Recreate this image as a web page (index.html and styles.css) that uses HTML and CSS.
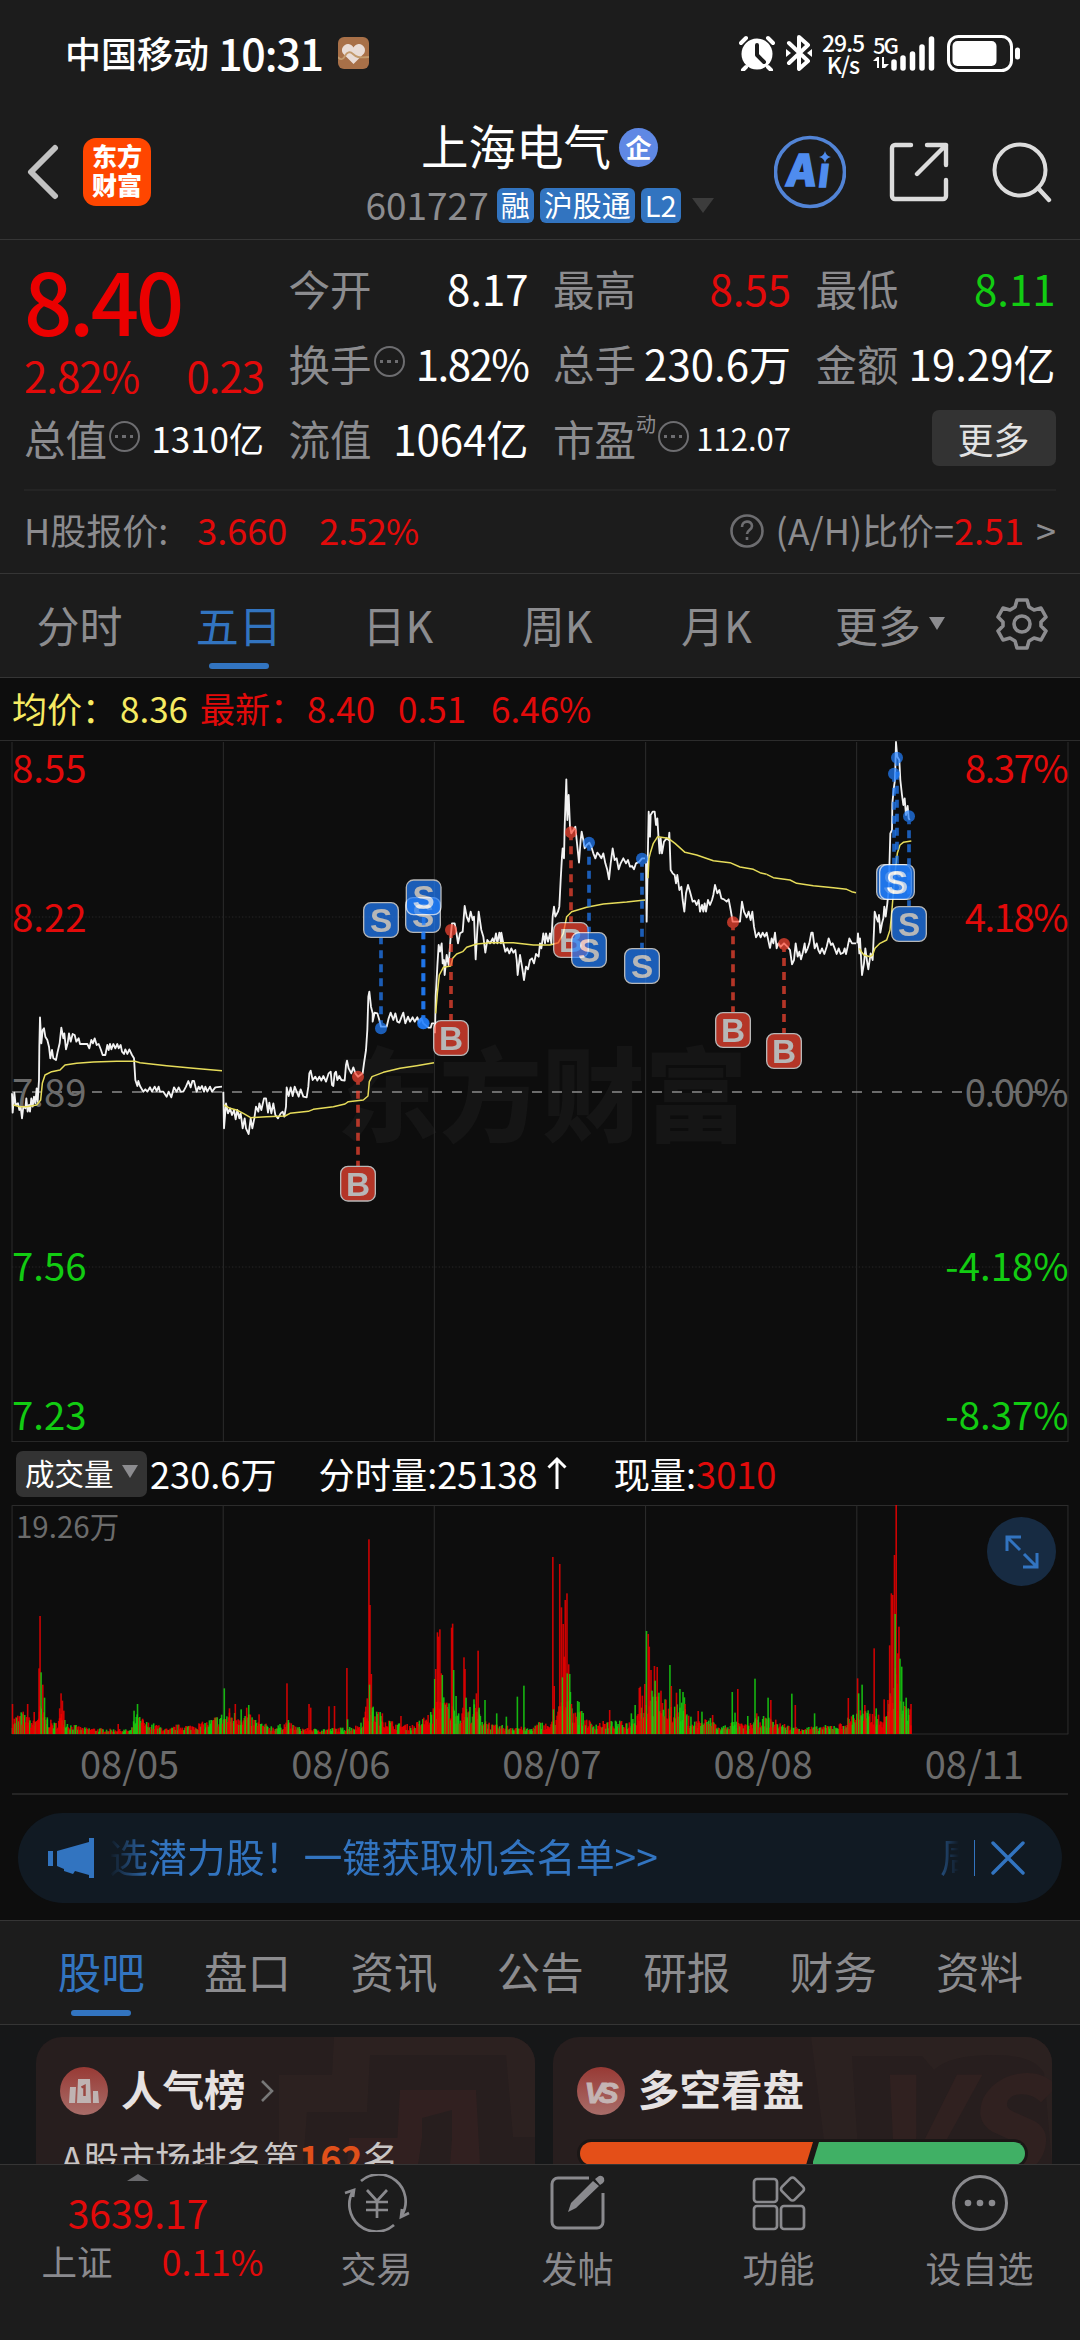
FILE: index.html
```html
<!DOCTYPE html>
<html lang="zh-CN">
<head>
    <meta charset="UTF-8">
    <meta name="viewport" content="width=device-width, initial-scale=1.0">
    <title>上海电气 601727</title>
    <link rel="stylesheet" href="styles.css">
</head>
<body>
    <div class="status-bar">
        <span class="carrier">中国移动</span>
        <span class="clock">10:31</span>
        <svg class="health" width="31" height="32" viewBox="0 0 31 32">
            <rect width="31" height="32" rx="6" fill="#a87048"/>
            <path d="M15.5 27 5 16.500C2 12 6 6.500 10.500 7c2.500.3 4 2 5 3.500 1-1.500 2.500-3.200 5-3.500 4.500-.5 8.500 5 5.500 9.500z" fill="#e9dcd6"/>
            <path d="M0 20c2 3 5 3 7-1s5-5 8-2 5 4 16 3" fill="none" stroke="#c39a6c" stroke-width="1.800"/>
        </svg>
        <div class="status-icons">
            <svg width="36" height="36" viewBox="0 0 36 36">
                <circle cx="18" cy="19" r="15.500" fill="#fff"/>
                <path d="M7 32l-3 3M29 32l3 3M2 8l5-5M34 8l-5-5" stroke="#fff" stroke-width="4" stroke-linecap="round"/>
                <path d="M18 10v10l7 7" fill="none" stroke="#1c1c1c" stroke-width="4" stroke-linecap="round" stroke-linejoin="round"/>
            </svg>
            <svg class="bluetooth" width="26" height="36" viewBox="0 0 26 36">
                <path d="M3 8l19 18-9 8V2l9 8L3 28" fill="none" stroke="#fff" stroke-width="4" stroke-linejoin="round" stroke-linecap="round"/>
                <path d="M0 14l5 4-5 4zM26 14l-5 4 5 4z" fill="#fff"/>
            </svg>
            <div class="speed">29.5<br>K/s</div>
            <div class="network">
                <span>5G</span>
                <svg width="16" height="11" viewBox="0 0 16 11">
                    <path d="M0 4l4-4h2v11H4V4zM9 0h2v7h5l-4 4H9z" fill="#fff"/>
                </svg>
            </div>
            <svg class="signal" width="44" height="36" viewBox="0 0 44 36">
                <path d="M3 27v6M12 23v10M21.500 19v14M31 12v21M40.500 4v29" stroke="#fff" stroke-width="5.500" stroke-linecap="round"/>
            </svg>
            <svg class="battery" width="74" height="37" viewBox="0 0 74 37">
                <rect x="1.500" y="1.500" width="63" height="34" rx="10" fill="none" stroke="#fff" stroke-width="3"/>
                <rect x="5.500" y="6" width="44" height="25" rx="5" fill="#fff"/>
                <rect x="68" y="12.500" width="5" height="12" rx="2.500" fill="#fff"/>
            </svg>
        </div>
    </div>

    <header class="header">
        <div class="header-left">
            <svg width="32" height="56" viewBox="0 0 32 56">
                <path d="M28 4L4 28l24 24" fill="none" stroke="#c2c2c2" stroke-width="6" stroke-linecap="round" stroke-linejoin="round"/>
            </svg>
            <div class="logo">东方<br>财富</div>
        </div>
        <div class="header-title">
            <div class="stock-name">上海电气<span class="ent-badge">企</span></div>
            <div class="stock-code">
                <span class="code">601727</span>
                <span class="tag">融</span>
                <span class="tag">沪股通</span>
                <span class="tag">L2</span>
                <span class="caret"></span>
            </div>
        </div>
        <div class="header-right">
            <svg width="72" height="74" viewBox="0 0 72 74">
                <circle cx="36" cy="37" r="34.500" fill="none" stroke="#5284d6" stroke-width="3.600"/>
                <g transform="translate(6 0) skewX(-7)">
                    <text class="ai-text" x="12" y="51">A</text>
                    <text class="ai-text" x="43" y="52">ı</text>
                </g>
                <path d="M51 16q1 5 6 6-5 1-6 6-1-5-6-6 5-1 6-6z" fill="#4f8cee"/>
            </svg>
            <svg width="60" height="60" viewBox="0 0 60 60">
                <path d="M22 3H6a3 3 0 0 0-3 3v48a3 3 0 0 0 3 3h48a3 3 0 0 0 3-3V38M38 3h19v20M57 3L28 32" fill="none" stroke="#dcdcdc" stroke-width="4.400" stroke-linecap="round" stroke-linejoin="round"/>
            </svg>
            <svg width="60" height="62" viewBox="0 0 60 62">
                <circle cx="28" cy="29" r="25.500" fill="none" stroke="#dcdcdc" stroke-width="4"/>
                <path d="M46 47l11 12" stroke="#dcdcdc" stroke-width="4.400" stroke-linecap="round"/>
            </svg>
        </div>
    </header>

    <section class="quote">
        <div class="quote-grid">
            <div class="price-box">
                <div class="price">8.40</div>
                <div class="change"><span>2.82%</span><span>0.23</span></div>
            </div>
            <div class="cell"><label>今开</label><b>8.17</b></div>
            <div class="cell"><label>最高</label><b class="red">8.55</b></div>
            <div class="cell"><label>最低</label><b class="green">8.11</b></div>
            <div class="cell"><label>换手</label><i class="more-dot"></i><b class="percent">1.82%</b></div>
            <div class="cell"><label>总手</label><b>230.6万</b></div>
            <div class="cell"><label>金额</label><b>19.29亿</b></div>
            <div class="cell"><label>总值</label><i class="more-dot"></i><b class="mid">1310亿</b></div>
            <div class="cell"><label>流值</label><b>1064亿</b></div>
            <div class="cell"><label>市盈<sup>动</sup></label><i class="more-dot"></i><b class="small">112.07</b></div>
            <div class="cell"><button class="more-btn">更多</button></div>
        </div>
        <div class="h-share">
            <span>H股报价:</span>
            <span class="red h-price">3.660</span>
            <span class="red h-pct">2.52%</span>
            <div class="ratio">
                <svg width="34" height="36" viewBox="0 0 34 36">
                    <circle cx="17" cy="18" r="15.500" fill="none" stroke="#6d6d70" stroke-width="2.600"/>
                    <path d="M12 14c0-7 10-7 10-1 0 4-5 4-5 8M17 24v3" fill="none" stroke="#6d6d70" stroke-width="2.600"/>
                </svg>
                <span>(A/H)比价=<span class="red">2.51</span></span>
                <span class="gt">&gt;</span>
            </div>
        </div>
    </section>

    <nav class="period-tabs">
        <a>分时</a>
        <a class="active">五日</a>
        <a>日K</a>
        <a>周K</a>
        <a>月K</a>
        <a>更多<i class="tri"></i></a>
        <a>
            <svg width="52" height="52" viewBox="0 0 52 52" fill="none" stroke="#8c8c8f" stroke-width="3.600" stroke-linejoin="round">
                <path d="M21 2h10l2 7 5 3 7-2 5 9-5 5v4l5 5-5 9-7-2-5 3-2 7H21l-2-7-5-3-7 2-5-9 5-5v-4l-5-5 5-9 7 2 5-3z"/>
                <circle cx="26" cy="26" r="8"/>
            </svg>
        </a>
    </nav>

    <div class="avg-row">
        <span class="yellow">均价：</span><span class="yellow v1">8.36</span>
        <span class="red">最新：</span><span class="red v2">8.40</span>
        <span class="red v3">0.51</span><span class="red v4">6.46%</span>
    </div>

    <div class="chart">
        <!-- three chart units per pixel -->
        <svg width="1080" height="702" viewBox="0 30 3240 2106">
            <text class="watermark" x="1010" y="1212">东方财富</text>
            <g class="grid-lines">
                <path d="M0 31.500H3240M36 2135H3204"/>
                <path d="M36 36V2136M670 36V2136M1303 36V2136M1937 36V2136M2570 36V2136M3204 36V2136"/>
                <path class="dotted" d="M36 561H3204M36 1611H3204"/>
                <path class="zero" d="M36 1086H3190"/>
            </g>
            <g class="axis">
                <text class="up" x="36" y="158">8.55</text>
                <text class="up" x="36" y="605">8.22</text>
                <text class="flat" x="36" y="1130">7.89</text>
                <text class="down" x="36" y="1652">7.56</text>
                <text class="down" x="36" y="2099">7.23</text>
                <text class="up end" x="3206" y="158" textLength="312">8.37%</text>
                <text class="up end" x="3206" y="605" textLength="312">4.18%</text>
                <text class="flat end" x="3206" y="1130" textLength="312">0.00%</text>
                <text class="down end" x="3206" y="1652" textLength="370">-4.18%</text>
                <text class="down end" x="3206" y="2099" textLength="370">-8.37%</text>
            </g>
            <!-- 08/05 and 08/06 -->
            <g>
                <polyline class="price-line" points="36,1090 38,1148 43,1088 47,1125 54,1120 58,1140 62,1130 66,1165 70,1130 76,1135 79,1105 83,1145 87,1125 90,1145 94,1105 98,1130 102,1100 106,1120 110,1075 113,1115 117,1050 118,950 120,862 124,940 128,900 132,895 136,920 142,930 147,950 151,985 156,960 160,985 168,990 173,965 179,940 184,893 190,925 193,910 198,958 203,940 207,910 212,935 218,912 224,915 229,935 236,925 240,942 262,942 268,955 274,930 279,940 284,925 290,945 296,942 303,960 308,975 316,975 322,945 326,960 330,942 334,958 340,942 346,955 352,942 356,955 362,945 366,965 372,972 376,958 382,972 388,958 396,975 402,985 406,1050 412,1068 415,1053 420,1068 430,1085 436,1078 442,1085 450,1072 456,1085 464,1070 470,1083 476,1070 480,1085 490,1085 500,1100 506,1085 514,1102 522,1072 530,1085 536,1072 542,1085 550,1085 558,1070 565,1053 572,1072 577,1053 582,1053 590,1085 596,1070 600,1078 606,1068 612,1085 616,1070 622,1085 630,1070 636,1085 646,1072 666,1070"/>
                <polyline class="avg-line" points="40,1125 60,1130 80,1130 110,1125 122,1110 127,1060 135,1035 155,1025 180,1020 195,1005 230,1000 280,996 350,994 405,994 420,998 500,1007 580,1015 666,1022"/>
                <polyline class="price-line" points="670,1085 672,1195 678,1120 684,1150 690,1135 696,1155 702,1140 707,1168 712,1140 718,1165 722,1150 728,1195 734,1165 738,1195 746,1212 752,1165 757,1195 763,1165 768,1130 775,1145 778,1120 784,1140 792,1105 798,1105 804,1148 808,1118 814,1150 820,1120 826,1155 834,1165 842,1150 848,1145 853,1160 858,1130 860,1072 866,1098 872,1072 878,1098 884,1070 890,1085 896,1100 902,1078 910,1100 920,1102 925,1070 928,1030 932,1022 938,1050 946,1040 952,1052 958,1040 964,1052 970,1038 978,1055 986,1030 992,1025 996,1065 1000,1068 1004,1030 1008,1025 1012,1050 1018,1038 1024,1050 1034,1052 1038,1005 1041,992 1046,1015 1054,1030 1060,1012 1066,1030 1074,1040 1088,1030 1092,1000 1098,960 1102,900 1105,800 1108,785 1113,830 1118,850 1118,875 1124,848 1132,850 1138,870 1143,890 1160,890 1166,865 1172,848 1180,870 1186,850 1192,875 1198,878 1205,860 1210,848 1216,880 1224,860 1230,875 1238,862 1244,875 1252,862 1258,878 1264,865 1270,880 1285,893 1292,893 1296,880 1303,880"/>
                <polyline class="avg-line" points="672,1125 690,1135 710,1140 730,1150 752,1163 800,1160 855,1158 870,1150 925,1144 940,1138 1000,1130 1035,1122 1045,1115 1090,1110 1104,1098 1108,1055 1116,1040 1150,1027 1200,1015 1250,1007 1302,998"/>
            </g>
            <!-- 08/07 and the morning of 08/08 -->
            <g transform="translate(1290 0)">
                <polyline class="price-line" points="15,910 17,800 22,710 26,645 30,665 35,640 38,700 42,690 44,735 50,675 56,705 62,620 66,580 74,580 78,600 84,640 90,610 98,605 104,528 110,560 116,575 122,545 128,570 132,560 137,688 142,600 146,545 154,600 160,620 166,668 172,630 180,640 188,625 192,640 198,610 202,640 208,608 213,640 214,608 220,640 226,665 232,655 238,670 244,655 250,668 256,660 260,690 263,735 270,675 276,710 282,750 288,710 294,718 300,690 306,685 312,700 318,672 326,680 330,640 334,655 340,610 345,640 348,610 354,635 360,610 364,640 368,560 372,530 376,560 384,545 388,530 392,450 396,380 398,355 402,385 404,290 409,148 412,270 416,195 420,290 424,310 430,300 436,290 440,330 447,398 452,330 455,305 460,330 464,355 470,345 478,338 484,350 490,370 496,385 502,368 508,375 514,385 520,370 526,400 532,420 537,448 542,400 548,355 554,390 560,385 566,418 572,400 580,385 588,400 594,390 600,410 606,408 612,418 618,400 628,395 636,385 645,385"/>
                <polyline class="avg-line" points="17,850 22,790 28,735 40,712 62,708 68,685 80,672 98,665 110,652 140,642 180,638 250,638 310,645 360,645 385,638 400,610 410,560 425,545 470,532 520,522 590,516 645,510"/>
                <polyline class="price-line" points="648,400 650,575 653,400 656,245 660,320 662,255 668,245 674,245 678,285 682,265 686,330 689,370 692,325 696,370 702,335 710,325 716,330 718,308 722,420 728,430 734,435 738,460 742,435 748,480 754,470 758,510 763,545 768,490 774,465 780,485 788,515 794,512 800,525 806,510 810,545 816,525 820,545 824,520 828,545 834,510 840,525 846,510 850,495 855,465 862,490 868,480 874,505 882,508 890,515 896,508 902,540 908,575 930,575 936,515 942,545 950,562 956,545 962,570 967,545 972,590 978,622 986,608 992,622 998,608 1004,620 1010,608 1020,655"/>
                <polyline class="avg-line" points="654,445 657,385 662,365 670,340 683,320 715,325 735,340 765,367 800,375 850,392 900,398 930,411 970,418 990,428 1010,433"/>
            </g>
            <!-- the rest of 08/08 and 08/11 -->
            <g transform="translate(2280 0)">
                <polyline class="price-line" points="30,655 35,625 40,640 45,608 50,655 55,640 62,650 72,640 82,650 90,660 96,703 102,690 107,640 113,680 118,665 123,688 128,670 134,640 137,668 143,655 148,640 154,608 158,608 164,655 170,640 175,660 180,670 186,655 193,672 200,650 206,625 213,645 218,640 224,655 230,672 236,655 242,672 250,668 254,655 258,672 263,650 268,625 276,640 288,640"/>
                <polyline class="avg-line" points="20,433 40,443 90,450 110,460 160,467 220,473 260,478 275,485 288,488"/>
                <polyline class="price-line" points="292,640 294,610 298,670 300,625 306,735 312,700 316,655 322,700 325,718 332,670 338,690 342,600 344,545 350,565 354,575 357,555 361,608 366,580 370,565 373,530 377,560 382,520 386,480 389,380 391,310 396,300 397,220 402,170 405,150 408,36 410,60 412,80 418,90 421,150 426,195 430,225 434,205 438,255 443,228 446,265 449,270"/>
                <polyline class="avg-line" points="298,655 304,665 312,675 330,680 338,675 345,655 360,640 380,630 390,600 394,560 400,490 406,420 412,370 420,345 430,337 454,333"/>
            </g>
            <g id="markers"></g>
        </svg>
    </div>

    <div class="volume-row">
        <button class="vol-btn">成交量<i class="tri"></i></button>
        <span>230.6万</span>
        <span class="minute-vol">分时量:25138</span>
        <svg class="arrow-up" width="20" height="34" viewBox="0 0 20 34">
            <path d="M10 33V3M1.500 11.500L10 3l8.500 8.500" fill="none" stroke="#fff" stroke-width="3"/>
        </svg>
        <span>现量:<span class="red">3010</span></span>
    </div>

    <div class="volume-chart">
        <svg width="1080" height="230" viewBox="0 225 3136 690" preserveAspectRatio="none">
            <g class="grid-lines">
                <path d="M35 226.500H3102M35 912H3102"/>
                <path d="M35 226V912M648 226V912M1261 226V912M1874.500 226V912M2488 226V912M3101 226V912"/>
            </g>
            <g id="volume"></g>
        </svg>
        <span class="vol-max">19.26万</span>
        <div class="expand">
            <svg width="34" height="34" viewBox="0 0 34 34" fill="none" stroke="#3274c0" stroke-width="3">
                <path d="M2 16V2h14M2 2l13 13M32 18v14H18M32 32L19 19"/>
            </svg>
        </div>
    </div>

    <div class="dates">
        <span>08/05</span><span>08/06</span><span>08/07</span><span>08/08</span><span>08/11</span>
    </div>

    <div class="notice-wrap">
        <div class="notice">
            <svg width="46" height="40" viewBox="0 0 46 40" fill="#3274c0">
                <path d="M0 13h5v15H0zM9 13l32-9V0h5v40h-5v-3l-14-4-2 3-9-3 0-2-7-3z"/>
            </svg>
            <div class="notice-text">选潜力股！一键获取机会名单&gt;&gt;</div>
            <div class="notice-next">周</div>
            <div class="notice-line"></div>
            <svg width="34" height="34" viewBox="0 0 34 34">
                <path d="M2 2l30 30M32 2L2 32" stroke="#3274c0" stroke-width="3.400" stroke-linecap="round"/>
            </svg>
        </div>
    </div>

    <nav class="info-tabs">
        <a class="active">股吧</a><a>盘口</a><a>资讯</a><a>公告</a><a>研报</a><a>财务</a><a>资料</a>
    </nav>

    <div class="cards">
        <div class="card">
            <svg class="card-bg" width="499" height="128" viewBox="0 0 499 128">
                <path d="M298 0h201v100h-22L470 18H334l-3 57h-60l-4 53h-24V38h53z" fill="#2c2120"/>
                <path d="M364 53h76l4 75h-30l2-27v-28l-30 8v20l-4 27h-22zM313 101h50v27h-52z" fill="#312020"/>
            </svg>
            <div class="card-head">
                <svg width="48" height="48" viewBox="0 0 48 48">
                    <defs>
                        <linearGradient id="badge" x2="0" y2="1">
                            <stop stop-color="#983a35"/>
                            <stop offset="1" stop-color="#a86d69"/>
                        </linearGradient>
                    </defs>
                    <circle cx="24" cy="24" r="24" fill="url(#badge)"/>
                    <path d="M10 20h6l-1 16H9zM18 12h12l1 24H17zM33 24h5l1 12h-6z" fill="#bfb3b2"/>
                    <path d="M21.500 20.500l3-1.500v10" fill="none" stroke="#9a4741" stroke-width="2.500"/>
                </svg>
                <h3>人气榜</h3>
                <svg class="chev" width="14" height="24" viewBox="0 0 14 24">
                    <path d="M2 2l10 10L2 22" fill="none" stroke="#777" stroke-width="2.600"/>
                </svg>
            </div>
            <div class="rank">A股市场排名第<b>162</b>名</div>
        </div>
        <div class="card">
            <svg class="card-bg" width="499" height="128" viewBox="0 0 499 128">
                <path d="M258 0h241v128h-15l-12-20-190 20h-8z" fill="#2b2120"/>
                <path d="M299 19h70l12 14q15-15 60-15 40 0 50 18l8 92H306z" fill="#271e1e"/>
                <text class="bg-vs" x="312" y="142">VS</text>
            </svg>
            <div class="card-head">
                <svg width="48" height="48" viewBox="0 0 48 48">
                    <circle cx="24" cy="24" r="24" fill="url(#badge)"/>
                    <text class="vs" x="7.500" y="36">VS</text>
                </svg>
                <h3>多空看盘</h3>
            </div>
            <div class="bar"><i class="bull"></i><i class="bear"></i></div>
        </div>
    </div>

    <footer class="bottom-bar">
        <div class="index">
            <i class="up-tri"></i>
            <div class="index-value">3639.17</div>
            <div class="index-row"><span>上证</span><span class="red">0.11%</span></div>
        </div>
        <div class="item">
            <svg width="66" height="58" viewBox="0 0 66 58" fill="none" stroke="#8a8a8e" stroke-width="2.700">
                <path d="M17 7a27 27 0 0 1 41 34M50 51A27 27 0 0 1 9 17M1 19l9-3-1 7M65 39l-8 4 1-8"/>
                <path d="M23 16l10 11 10-11M33 27v17M22 28h22M22 36h22"/>
            </svg>
            <span>交易</span>
        </div>
        <div class="item">
            <svg width="56" height="56" viewBox="0 0 56 56">
                <path d="M39 3H8a6 6 0 0 0-6 6v38a6 6 0 0 0 6 6h39a6 6 0 0 0 6-6V18" fill="none" stroke="#8a8a8e" stroke-width="3"/>
                <path d="M18 37l3-9 22-22 6 5-23 22zM45 4l4-3q3-1 5 2 1 3-1 5l-3 2z" fill="#8a8a8e"/>
            </svg>
            <span>发帖</span>
        </div>
        <div class="item">
            <svg width="54" height="54" viewBox="0 0 54 54" fill="none" stroke="#8a8a8e" stroke-width="2.700">
                <rect x="2" y="3" width="23" height="23" rx="3"/>
                <rect x="2" y="30" width="23" height="23" rx="3"/>
                <rect x="29" y="30" width="23" height="23" rx="3"/>
                <rect x="31.500" y="4" width="18" height="18" rx="3" transform="rotate(45 40.500 13)"/>
            </svg>
            <span>功能</span>
        </div>
        <div class="item">
            <svg width="58" height="58" viewBox="0 0 58 58">
                <circle cx="29" cy="29" r="26.500" fill="none" stroke="#8a8a8e" stroke-width="3"/>
                <g fill="#8a8a8e"><circle cx="17" cy="29" r="3.300"/><circle cx="29" cy="29" r="3.300"/><circle cx="41" cy="29" r="3.300"/></g>
            </svg>
            <span>设自选</span>
        </div>
    </footer>

    <script src="script.js"></script>
</body>
</html>
```

FILE: styles.css
```css
* {
    box-sizing: border-box;
}
body {
    margin: 0;
    width: 1080px;
    height: 2340px;
    overflow: hidden;
    display: flex;
    flex-direction: column;
    background: #0d0d0d;
    color: #fff;
    font-family: "Noto Sans CJK SC", sans-serif;
    white-space: nowrap;
}
svg {
    display: block;
    flex: none;
}
button {
    font-family: inherit;
    border: none;
    padding: 0;
    color: inherit;
}
.red { color: #e20a0a; }
.green { color: #12cc12; }
.yellow { color: #f6ea62; }

/* status bar */
.status-bar {
    height: 108px;
    flex: none;
    display: flex;
    align-items: center;
    padding: 0 59px 2px 65px;
    background: #1c1c1c;
}
.carrier {
    font-size: 36px;
    font-weight: 500;
    line-height: 50px;
    margin-top: -2px;
}
.clock {
    font-size: 43px;
    font-weight: 500;
    line-height: 50px;
    letter-spacing: -1.200px;
    margin: -3px 0 0 9px;
}
.health {
    margin-left: 15px;
}
.status-icons {
    display: flex;
    align-items: center;
    margin-left: auto;
}
.bluetooth { margin-left: 11px; }
.speed {
    width: 44px;
    margin-left: 9px;
    font-size: 23px;
    font-weight: 500;
    line-height: 22px;
    letter-spacing: -1px;
    text-align: center;
}
.network {
    margin: -5px 0 0 8px;
    width: 24px;
    font-size: 22px;
    font-weight: 500;
    line-height: 20px;
    letter-spacing: -2px;
}
.network svg { margin-top: 3px; }
.signal { margin-left: -6px; }
.battery { margin-left: 12px; }

/* header */
.header {
    height: 132px;
    flex: none;
    display: grid;
    grid-template-columns: 1fr auto 1fr;
    padding: 0 28px 0 27px;
    background: #1c1c1c;
    border-bottom: 1px solid #353535;
}
.header-left {
    display: flex;
    align-items: center;
    gap: 24px;
    height: 128px;
}
.logo {
    width: 68px;
    height: 68px;
    border-radius: 13px;
    background: #ff4600;
    font-size: 25px;
    font-weight: 900;
    line-height: 29px;
    padding-top: 3px;
    text-align: center;
}
.header-title {
    display: flex;
    flex-direction: column;
    align-items: center;
    padding-top: 7px;
}
.stock-name {
    display: flex;
    align-items: center;
    height: 60px;
    font-size: 47.500px;
    line-height: 60px;
}
.ent-badge {
    width: 39px;
    height: 39px;
    margin: 4px 0 0 8px;
    border-radius: 50%;
    background: #5f88e4;
    font-size: 26px;
    font-weight: 700;
    line-height: 37px;
    text-align: center;
}
.stock-code {
    display: flex;
    align-items: center;
    gap: 6px;
    height: 60px;
}
.code {
    font-size: 37px;
    line-height: 54px;
    margin: -3px 2px 0 0;
    color: #8c8c8f;
}
.tag {
    height: 35px;
    padding: 0 4px;
    border-radius: 6px;
    background: #3274c0;
    font-size: 29px;
    line-height: 33px;
}
.caret {
    margin-left: 5px;
    border: 11px solid transparent;
    border-top: 15px solid #3c3c3c;
    border-bottom: 0;
}
.header-right {
    display: flex;
    align-items: center;
    justify-content: flex-end;
    gap: 43px;
    height: 128px;
}
.ai-text {
    font: 900 43px "Noto Sans CJK SC", sans-serif;
    fill: #4f8cee;
    stroke: #4f8cee;
    stroke-width: 1.5px;
}

/* quote */
.quote {
    height: 334px;
    flex: none;
    padding: 10px 24px 0;
    background: #1c1c1c;
    border-bottom: 1px solid #353535;
}
.quote-grid {
    display: grid;
    grid-template-columns: 240px 240px 238px 240px;
    grid-template-rows: repeat(3, 75px);
    column-gap: 24.500px;
}
.price-box {
    grid-row: span 2;
    color: #eb0000;
}
.price {
    height: 100px;
    font-size: 85px;
    font-weight: 500;
    line-height: 98px;
    letter-spacing: -3.500px;
}
.change {
    display: flex;
    justify-content: space-between;
    font-size: 42px;
    line-height: 50px;
    letter-spacing: -1px;
    color: #e20a0a;
}
.cell {
    display: flex;
    align-items: center;
    height: 75px;
    line-height: 60px;
}
.cell label {
    font-size: 41.500px;
    color: #8c8c8f;
}
.cell b {
    margin-left: auto;
    font-size: 42px;
    font-weight: 400;
}
.cell .percent { letter-spacing: -1.5px; }
.cell .mid { font-size: 35px; }
.cell .small { font-size: 31px; }
.cell sup {
    display: inline-block;
    font-size: 20px;
    line-height: 20px;
    vertical-align: 24px;
}
.more-dot {
    width: 31px;
    height: 31px;
    flex: none;
    margin: -3px 0 0 2px;
    border: 2.500px solid #6d6d70;
    border-radius: 50%;
    background:
        radial-gradient(circle 2px at 5.500px 50%, #6d6d70 90%, transparent),
        radial-gradient(circle 2px at 13px 50%, #6d6d70 90%, transparent),
        radial-gradient(circle 2px at 20.500px 50%, #6d6d70 90%, transparent);
}
.more-btn {
    width: 124px;
    height: 56px;
    margin-left: auto;
    border-radius: 7px;
    background: #333;
    color: #e2e2e2;
    font-size: 36px;
    line-height: 50px;
}
.h-share {
    display: flex;
    align-items: center;
    height: 84px;
    margin-top: 14px;
    padding-bottom: 7px;
    border-top: 2px solid #242424;
    font-size: 36px;
    line-height: 60px;
    color: #8c8c8f;
}
.h-price { margin-left: 29px; }
.h-pct { margin-left: 32px; letter-spacing: -0.8px; }
.ratio {
    display: flex;
    align-items: center;
    margin-left: auto;
}
.ratio svg { margin: 4px 12px 0 0; }
.gt { margin-left: 12px; }

/* period tabs */
.period-tabs {
    height: 104px;
    flex: none;
    display: grid;
    grid-template-columns: repeat(5, 159.200px) 188px 76px;
    background: #1c1c1c;
    border-bottom: 1px solid #353535;
    font-size: 43px;
    color: #8c8c8f;
}
.period-tabs a,
.info-tabs a {
    position: relative;
    display: flex;
    align-items: center;
    justify-content: center;
    padding-bottom: 4px;
}
.period-tabs .active,
.info-tabs .active {
    color: #3274c0;
}
.period-tabs .active::after,
.info-tabs .active::after {
    content: "";
    position: absolute;
    bottom: 8px;
    width: 60px;
    height: 6px;
    border-radius: 3px;
    background: #3274c0;
}
.tri {
    margin-left: 8px;
    border: 8px solid transparent;
    border-top: 13px solid #8c8c8f;
    border-bottom: 0;
}

.avg-row {
    height: 62px;
    flex: none;
    display: flex;
    align-items: center;
    padding: 0 0 3px 12px;
    font-size: 35px;
    line-height: 59px;
}
.v1 { margin: 0 12px 0 3px; }
.v2 { margin-left: 2px; }
.v3 { margin-left: 23px; }
.v4 { margin-left: 25px; }

/* price chart */
.chart {
    height: 702px;
    flex: none;
}
.grid-lines path {
    fill: none;
    stroke: #2c2c2c;
    stroke-width: 3;
}
.grid-lines .dotted {
    stroke: #262626;
    stroke-dasharray: 4 6;
}
.grid-lines .zero {
    stroke: #8a8a8a;
    stroke-width: 5;
    stroke-dasharray: 30;
}
.watermark {
    font-size: 308px;
    font-weight: 900;
    fill: #151515;
}
.axis text { font-size: 115px; }
.axis .end { text-anchor: end; }
.axis .up { fill: #e20a0a; }
.axis .down { fill: #12cc12; }
.axis .flat { fill: #6b6b6b; }
.price-line,
.avg-line {
    fill: none;
    stroke: #f2f2f2;
    stroke-width: 5.500;
    stroke-linejoin: round;
}
.avg-line {
    stroke: #e6dc5a;
    stroke-width: 4.500;
}
.marker { opacity: 0.7; }
.marker line {
    stroke-width: 11;
    stroke-dasharray: 24 18;
}
.marker rect {
    stroke: #fff;
    stroke-width: 4;
}
.marker text {
    font: 700 100px "Liberation Sans", sans-serif;
    text-anchor: middle;
    fill: #fff;
}
.marker.sell rect, .marker.sell circle { fill: #2280ff; }
.marker.sell line { stroke: #2280ff; }
.marker.buy rect, .marker.buy circle { fill: #fb4733; }
.marker.buy line { stroke: #fb4733; }

/* volume */
.volume-row {
    height: 63px;
    flex: none;
    display: flex;
    align-items: center;
    padding: 0 0 2px 16px;
    font-size: 36.200px;
    line-height: 60px;
}
.vol-btn {
    display: flex;
    align-items: center;
    width: 131px;
    height: 46px;
    margin: 2px 3px 0 0;
    padding: 0 0 4px 9px;
    border-radius: 7px;
    background: #333;
    font-size: 29.500px;
    line-height: 40px;
}
.minute-vol { margin-left: 42px; }
.arrow-up { margin: 0 47px 0 9px; }
.volume-chart {
    position: relative;
    height: 230px;
    flex: none;
}
.volume-chart .r { fill: #f00000; }
.volume-chart .g { fill: #17d412; }
#volume rect { opacity: 0.85; }
.vol-max {
    position: absolute;
    left: 16px;
    top: 0;
    font-size: 29.500px;
    line-height: 40px;
    color: #6b6b6b;
}
.expand {
    position: absolute;
    right: 24px;
    top: 12px;
    width: 69px;
    height: 69px;
    border-radius: 50%;
    background: #172b42;
    display: flex;
    align-items: center;
    justify-content: center;
}
.dates {
    display: grid;
    grid-template-columns: repeat(5, 211.200px);
    flex: none;
    height: 60px;
    margin: 0 12px;
    padding-left: 12px;
    overflow: hidden;
    border-bottom: 2px solid #242424;
    font-size: 38px;
    line-height: 56px;
    text-align: center;
    color: #6b6b6b;
}

/* notice */
.notice-wrap {
    height: 125px;
    flex: none;
    padding: 18px 18px 0;
}
.notice {
    display: flex;
    align-items: center;
    height: 90px;
    padding: 0 37px 0 30px;
    border-radius: 45px;
    background: #111a23;
    color: #3274c0;
    font-size: 38.900px;
    line-height: 60px;
}
.notice-text {
    margin: -7px 0 0 15px;
    -webkit-mask-image: linear-gradient(90deg, transparent, #000 44px);
    mask-image: linear-gradient(90deg, transparent, #000 44px);
}
.notice-next {
    width: 19px;
    margin: -7px 15px 0 auto;
    overflow: hidden;
    opacity: 0.6;
    -webkit-mask-image: linear-gradient(90deg, #000, transparent);
    mask-image: linear-gradient(90deg, #000, transparent);
}
.notice-line {
    width: 1px;
    height: 36px;
    margin-right: 16px;
    background: #3274c0;
}

.info-tabs {
    height: 105px;
    flex: none;
    display: grid;
    grid-template-columns: repeat(7, 146.400px);
    padding-left: 28px;
    background: #1c1c1c;
    border-top: 1px solid #353535;
    border-bottom: 1px solid #353535;
    font-size: 43.500px;
    color: #8c8c8f;
}

/* cards */
.cards {
    height: 139px;
    flex: none;
    display: flex;
    gap: 18px;
    padding: 12px 28px 0 36px;
    overflow: hidden;
    background: #161718;
}
.card {
    position: relative;
    width: 499px;
    height: 200px;
    padding: 30px 24px 0;
    border-radius: 26px;
    overflow: hidden;
    background: #271e1e;
}
.card-bg {
    position: absolute;
    left: 0;
    top: 0;
}
.card-head {
    position: relative;
    display: flex;
    align-items: center;
    height: 48px;
}
.card-head h3 {
    margin: -6px 0 0 13px;
    font-size: 41.500px;
    font-weight: 700;
    line-height: 48px;
    color: #e6e2e2;
}
.chev { margin-left: 14px; }
.rank {
    position: relative;
    margin: 22px 0 0 1px;
    font-size: 36px;
    line-height: 40px;
    color: #c9c5c4;
}
.rank b { color: #e0501a; }
.bg-vs {
    font: italic 900 140px "Noto Sans CJK SC", sans-serif;
    fill: #302120;
}
.vs {
    font: italic 700 30px "Liberation Sans", sans-serif;
    letter-spacing: -6px;
    fill: #c4b4b3;
    stroke: #c4b4b3;
}
.bar {
    position: relative;
    display: flex;
    width: 451px;
    height: 29px;
    margin-top: 24px;
    border: 3px solid #1b1716;
    border-radius: 15px;
    overflow: hidden;
    background: #1b1716;
}
.bull {
    width: 233px;
    background: #e44f18;
    clip-path: polygon(0 0, 100% 0, 226px 100%, 0 100%);
}
.bear {
    flex: 1;
    background: #40b065;
    clip-path: polygon(6px 0, 100% 0, 100% 100%, -1px 100%);
}

/* bottom bar */
.bottom-bar {
    flex: 1;
    display: grid;
    grid-template-columns: 276px repeat(4, 201px);
    background: #1c1c1c;
    border-top: 1px solid #353535;
    color: #8a8a8e;
}
.index {
    display: flex;
    flex-direction: column;
    align-items: center;
    padding-top: 9px;
}
.up-tri {
    border: 11px solid transparent;
    border-bottom: 7px solid #6a6a6d;
    border-top: 0;
}
.index-value {
    margin-top: 6px;
    font-size: 39px;
    line-height: 50px;
    color: #e20a0a;
}
.index-row {
    display: flex;
    justify-content: space-between;
    width: 222px;
    margin-left: 29px;
    font-size: 35.500px;
    line-height: 48px;
}
.item {
    display: flex;
    flex-direction: column;
    align-items: center;
}
.item svg {
    height: 58px;
    margin-top: 9px;
}
.item span {
    margin-top: 11px;
    font-size: 36px;
    line-height: 48px;
}
```

FILE: script.js
```js
// trades: type, x, badge y, dot y
const trades = [
    ['B', 1074, 1361, 1040], ['S', 1143, 570, 895], ['S', 1269, 555, 880], ['S', 1271, 502, 880],
    ['B', 1353, 924, 600], ['B', 1713, 630, 307], ['S', 1767, 660, 338], ['S', 1926, 708, 386],
    ['B', 2199, 900, 577], ['B', 2352, 963, 642], ['S', 2682, 456, 131], ['S', 2691, 456, 83],
    ['S', 2727, 582, 259]
];

document.getElementById('markers').innerHTML = trades.map(([type, x, y, dot]) => {
    const edge = y > dot ? y - 52 : y + 52;
    return `<g class="marker ${type === 'B' ? 'buy' : 'sell'}">
        <line x1="${x}" y1="${dot}" x2="${x}" y2="${edge}"/>
        <circle cx="${x}" cy="${dot}" r="18"/>
        <rect x="${x - 52}" y="${y - 52}" width="104" height="104" rx="22"/>
        <text x="${x}" y="${y + 36}">${type}</text>
    </g>`;
}).join('');

// usual height of the bars along the axis: x, height
const level = [
    [35, 45], [60, 60], [100, 35], [115, 80], [135, 45], [160, 30], [180, 60], [200, 30], [240, 18],
    [300, 15], [380, 12], [395, 55], [420, 35], [450, 28], [490, 12], [510, 25], [550, 25], [600, 35],
    [640, 55], [680, 60], [720, 55], [760, 30], [800, 20], [830, 35], [870, 18], [920, 14], [1000, 18],
    [1040, 25], [1066, 70], [1085, 75], [1120, 45], [1150, 30], [1200, 25], [1250, 60], [1280, 110],
    [1310, 80], [1340, 70], [1380, 80], [1400, 50], [1430, 25], [1500, 22], [1540, 15], [1568, 35],
    [1598, 25], [1628, 90], [1653, 90], [1678, 70], [1718, 30], [1758, 35], [1828, 35], [1868, 90],
    [1908, 110], [1948, 80], [1978, 85], [2008, 35], [2068, 45], [2088, 18], [2128, 35], [2168, 25],
    [2208, 50], [2248, 40], [2298, 20], [2368, 20], [2448, 30], [2488, 70], [2528, 60], [2568, 45],
    [2598, 180], [2618, 90], [2647, 60]
];

// peaks: x, top, colour
const peaks = [
    [36, 822, 'r'], [67, 845, 'r'], [80, 822, 'r'], [99, 846, 'r'], [113, 715, 'r'], [116, 558, 'r'],
    [119, 727, 'g'], [124, 764, 'r'], [129, 803, 'g'], [137, 862, 'g'], [173, 835, 'r'], [177, 790, 'r'],
    [181, 812, 'r'], [185, 842, 'r'], [343, 882, 'r'], [389, 842, 'g'], [399, 822, 'g'], [414, 866, 'r'],
    [651, 775, 'g'], [666, 835, 'r'], [683, 822, 'r'], [700, 838, 'g'], [716, 833, 'r'], [722, 825, 'g'],
    [752, 853, 'r'], [833, 760, 'r'], [837, 870, 'g'], [897, 822, 'r'], [902, 833, 'r'], [955, 829, 'r'],
    [971, 828, 'r'], [1007, 714, 'r'], [1009, 868, 'g'], [1062, 830, 'r'], [1066, 805, 'r'],
    [1071, 328, 'r'], [1074, 525, 'r'], [1073, 764, 'g'], [1078, 732, 'r'], [1081, 833, 'g'],
    [1110, 850, 'r'], [1164, 858, 'r'], [1262, 747, 'g'], [1265, 717, 'r'], [1270, 607, 'r'],
    [1273, 620, 'r'], [1277, 598, 'r'], [1281, 730, 'r'], [1284, 735, 'g'], [1297, 818, 'r'],
    [1311, 593, 'r'], [1314, 581, 'r'], [1317, 720, 'g'], [1324, 798, 'g'], [1347, 682, 'r'],
    [1350, 717, 'r'], [1353, 803, 'g'], [1376, 808, 'g'], [1383, 790, 'r'], [1388, 662, 'r'],
    [1391, 833, 'g'], [1408, 810, 'g'], [1442, 850, 'g'], [1470, 860, 'g'], [1502, 800, 'g'],
    [1521, 767, 'g'], [1605, 381, 'r'], [1609, 768, 'r'], [1607, 838, 'g'], [1625, 402, 'r'],
    [1630, 532, 'r'], [1635, 582, 'r'], [1633, 742, 'g'], [1638, 680, 'r'], [1641, 510, 'r'],
    [1646, 490, 'r'], [1647, 730, 'g'], [1651, 703, 'r'], [1654, 732, 'g'], [1656, 786, 'g'],
    [1659, 822, 'r'], [1677, 813, 'g'], [1681, 816, 'g'], [1689, 843, 'g'], [1770, 840, 'r'],
    [1833, 850, 'g'], [1844, 825, 'g'], [1856, 774, 'r'], [1859, 770, 'r'], [1865, 797, 'r'],
    [1872, 762, 'r'], [1877, 603, 'g'], [1882, 612, 'r'], [1885, 650, 'r'], [1890, 720, 'r'],
    [1893, 782, 'g'], [1900, 708, 'r'], [1902, 752, 'g'], [1908, 711, 'r'], [1913, 788, 'g'],
    [1919, 782, 'r'], [1945, 705, 'g'], [1949, 768, 'r'], [1964, 788, 'r'], [1974, 777, 'g'],
    [1983, 786, 'g'], [1987, 802, 'g'], [1989, 822, 'r'], [2006, 860, 'g'], [2027, 843, 'r'],
    [2038, 845, 'g'], [2069, 855, 'r'], [2126, 786, 'g'], [2134, 848, 'g'], [2142, 777, 'r'],
    [2171, 858, 'g'], [2192, 746, 'g'], [2197, 850, 'r'], [2230, 803, 'g'], [2238, 810, 'r'],
    [2299, 791, 'g'], [2309, 825, 'r'], [2365, 850, 'g'], [2463, 804, 'r'], [2477, 855, 'g'],
    [2490, 745, 'r'], [2493, 790, 'g'], [2503, 764, 'g'], [2511, 825, 'r'], [2538, 655, 'r'],
    [2544, 835, 'g'], [2567, 808, 'r'], [2578, 810, 'r'], [2583, 646, 'r'], [2588, 490, 'r'],
    [2592, 495, 'r'], [2597, 375, 'r'], [2602, 225, 'r'], [2599, 552, 'g'], [2607, 670, 'r'],
    [2610, 590, 'r'], [2613, 686, 'g'], [2618, 710, 'g'], [2623, 815, 'g'], [2631, 803, 'g'],
    [2637, 835, 'g'], [2645, 822, 'r']
];

const base = 912;
let seed = 7;

function random() {
    seed = (seed * 16807) % 2147483647;
    return seed / 2147483647;
}

function levelAt(x) {
    const i = Math.max(1, level.findIndex(p => p[0] >= x));
    const [x0, h0] = level[i - 1];
    const [x1, h1] = level[i];
    return h0 + (h1 - h0) * (x - x0) / (x1 - x0);
}

function bar(x, top, color) {
    return `<rect class="${color}" x="${(x - 2).toFixed(1)}" y="${top}" width="4.6" height="${base - top}"/>`;
}

let bars = '';
for (let x = 36; x < 2646; x += 2.53) {
    const h = Math.round(levelAt(x) * (0.4 + random() * 0.75));
    bars += bar(x, base - h, random() < 0.62 ? 'r' : 'g');
}
bars += peaks.map(p => bar(...p)).join('');
document.getElementById('volume').innerHTML = bars;
```
